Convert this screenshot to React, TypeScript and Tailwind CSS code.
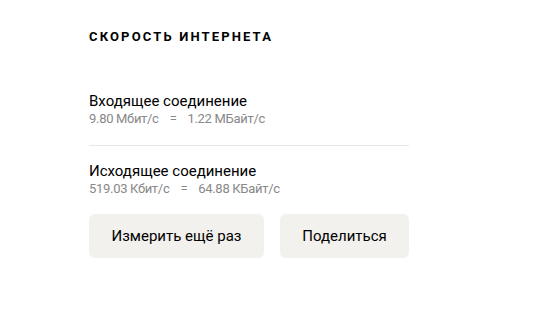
function Rate({ left, right }: { left: string; right: string }) {
  return (
    <div className="flex text-[13px] leading-[16px] tracking-[-0.3px] text-[#888]">
      <span>{left}</span>
      <span className="mx-[11px]">=</span>
      <span>{right}</span>
    </div>
  );
}

export default function App() {
  const font = { fontFamily: "Roboto, 'Noto Sans', sans-serif" };
  return (
    <div className="min-h-[320px] w-[541px] bg-white text-black" style={font}>
      <div className="w-[320px] pl-[89px] pt-[29px] box-content">
        <h2 className="text-[13px] font-bold uppercase leading-[16px] tracking-[0.165em]">
          Скорость интернета
        </h2>
        <div className="mt-[46px] border-b border-[#e8e8e8] pb-[18px]">
          <div className="text-[15px] leading-[20px]">Входящее соединение</div>
          <Rate left="9.80 Мбит/с" right="1.22 МБайт/с" />
        </div>
        <div className="pt-[15px]">
          <div className="text-[15px] leading-[20px]">Исходящее соединение</div>
          <Rate left="519.03 Кбит/с" right="64.88 КБайт/с" />
        </div>
        <div className="mt-[17px] flex gap-4">
          <button className="h-[44px] w-[175px] rounded-[6px] bg-[#f2f1ed] text-[15px]">
            Измерить ещё раз
          </button>
          <button className="h-[44px] w-[129px] rounded-[6px] bg-[#f2f1ed] text-[15px]">
            Поделиться
          </button>
        </div>
      </div>
    </div>
  );
}
